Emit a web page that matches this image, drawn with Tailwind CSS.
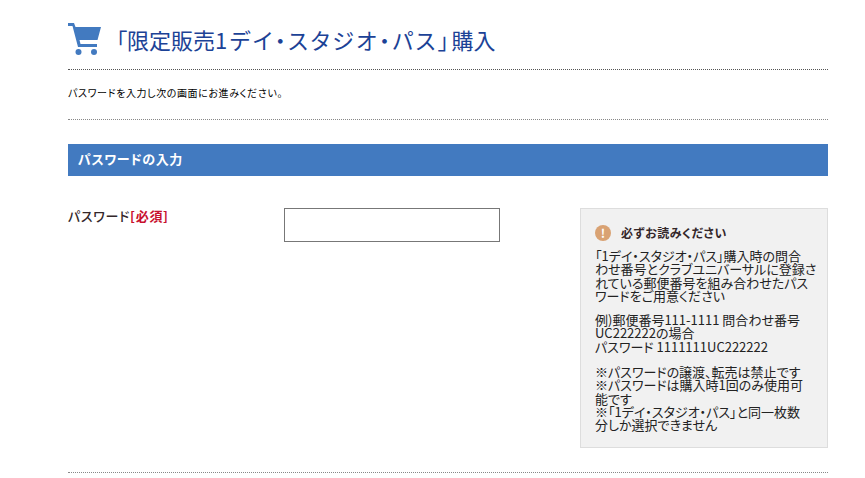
<!DOCTYPE html>
<html lang="ja">
  <head>
    <meta charset="UTF-8" />
    <meta name="viewport" content="width=device-width, initial-scale=1.0" />
    <title>限定販売1デイ・スタジオ・パス 購入</title>
    <script src="https://cdn.jsdelivr.net/npm/@tailwindcss/browser@4"></script>
  </head>

  <body class="h-screen overflow-hidden bg-white font-['Noto_Sans_CJK_JP','Liberation_Sans',sans-serif] [font-feature-settings:'palt'] text-[#222]">
    <div class="ml-[68px] w-[760px]">
      <!-- title -->
      <div class="flex items-center h-[70px] pt-[9px] border-b border-dotted border-[#555]">
        <svg class="w-[34px] h-[34px] mr-[14px]" viewBox="0 0 34 34" fill="#427ac0">
          <path d="M0 1h6l1.500 4H33L29.500 18H11.500l1 4H29v3H10L4.500 4H0z" />
          <circle cx="10.500" cy="30" r="3" />
          <circle cx="26" cy="30" r="3" />
        </svg>
        <h1 class="text-[22px] leading-none text-[#1c4296] whitespace-nowrap">「限定販売<span class="tracking-[2.500px]">1デイ・スタジオ・パス」</span>購入</h1>
      </div>

      <p class="h-[50px] flex items-center pb-[4px] text-[10px] tracking-[0.600px] leading-none border-b border-dotted border-[#888] text-black">パスワードを入力し次の画面にお進みください。</p>

      <!-- section header -->
      <h2 class="mt-[24px] h-[32px] flex items-center pl-[10px] pb-[4px] bg-[#427ac0] text-white text-[13px] tracking-[0.600px] font-bold leading-none">パスワードの入力</h2>

      <div class="flex items-start mt-[32px] h-[240px]">
        <div class="w-[216px] -mt-[1px] text-[13px] tracking-[0.700px] leading-[18px] font-medium text-[#33272a] whitespace-nowrap">パスワード<span class="font-bold text-[#c8102e]">[必須]</span></div>
        <input type="text" class="w-[216px] h-[34px] border border-[#777] bg-white" />

        <!-- notice -->
        <div class="ml-[80px] w-[248px] h-[240px] bg-[#f1f1f1] border border-[#ddd] pt-[15px] pl-[14px] text-[13px] leading-[13.300px] text-[#222] whitespace-nowrap">
          <div class="flex items-center h-[18px] mb-[7px]">
            <span class="w-[16px] h-[16px] rounded-full bg-[#d9a273] text-white text-[12px] font-bold leading-none flex items-center justify-center">!</span>
            <span class="ml-[10px] text-[12px] tracking-[0.500px] font-bold text-[#33272a]">必ずお読みください</span>
          </div>
          <p>「1デイ・スタジオ・パス」購入時の問合<br />わせ番号とクラブユニバーサルに登録さ<br />れている郵便番号を組み合わせたパス<br />ワードをご用意ください</p>
          <p class="mt-[11px]">例)郵便番号111-1111 問合わせ番号<br />UC222222の場合<br />パスワード 1111111UC222222</p>
          <p class="mt-[12px]">※パスワードの譲渡、転売は禁止です<br />※パスワードは購入時1回のみ使用可<br />能です<br />※「1デイ・スタジオ・パス」と同一枚数<br />分しか選択できません</p>
        </div>
      </div>

      <div class="mt-[24px] border-b border-dotted border-[#888]"></div>
    </div>
  </body>
</html>
